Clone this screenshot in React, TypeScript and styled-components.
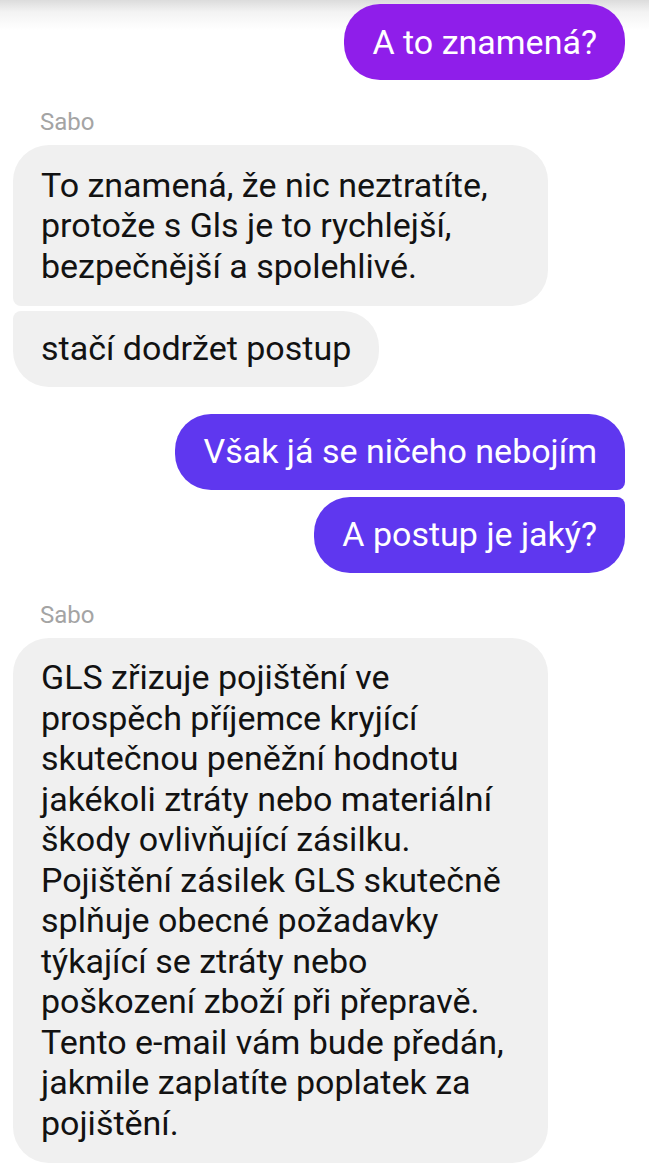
import React from "react";
import styled, { createGlobalStyle } from "styled-components";

const GlobalStyle = createGlobalStyle`
  html, body {
    margin: 0;
    padding: 0;
    background: #ffffff;
  }
  body {
    font-family: Roboto, "Noto Sans", Arial, sans-serif;
  }
`;

type Side = "in" | "out";
type Pos = "single" | "first" | "last";

const BIG = 36;
const SMALL = 8;

const radius = (side: Side, pos: Pos) => {
  // order: top-left, top-right, bottom-right, bottom-left
  const tl = side === "in" && pos === "last" ? SMALL : BIG;
  const bl = side === "in" && pos === "first" ? SMALL : BIG;
  const tr = side === "out" && pos === "last" ? SMALL : BIG;
  const br = side === "out" && pos === "first" ? SMALL : BIG;
  return `${tl}px ${tr}px ${br}px ${bl}px`;
};

const Page = styled.div`
  width: 649px;
  min-height: 1168px;
  box-sizing: border-box;
  padding: 4px 24px 0 13px;
  background: linear-gradient(to bottom, #dcdcdc 0px, #f3f3f3 12px, #ffffff 30px);
  display: flex;
  flex-direction: column;
`;

const Group = styled.div<{ $side: Side; $gap: number; $top: number }>`
  display: flex;
  flex-direction: column;
  align-items: ${(p) => (p.$side === "out" ? "flex-end" : "flex-start")};
  gap: ${(p) => p.$gap}px;
  margin-top: ${(p) => p.$top}px;
`;

const Sender = styled.div`
  font-size: 24px;
  line-height: 25px;
  color: #a4a4a4;
  margin: 30px 0 10px 27px;
`;

const Bubble = styled.div<{ $side: Side; $pos: Pos; $wide?: boolean; $tone?: string }>`
  box-sizing: border-box;
  width: ${(p) => (p.$wide ? "535px" : "fit-content")};
  padding: ${(p) => (p.$wide ? "19.5px 28px" : "17.75px 28px")};
  font-size: 34px;
  line-height: 40.5px;
  color: ${(p) => (p.$side === "out" ? "#ffffff" : "#121212")};
  background: ${(p) => (p.$side === "out" ? p.$tone || "#5f37ef" : "#f0f0f0")};
  border-radius: ${(p) => radius(p.$side, p.$pos)};
  white-space: nowrap;
`;

export default function App() {
  return (
    <>
      <GlobalStyle />
      <Page>
        <Group $side="out" $gap={7} $top={0}>
          <Bubble $side="out" $pos="single" $tone="#8f1eea">
            A to znamená?
          </Bubble>
        </Group>

        <Sender>Sabo</Sender>
        <Group $side="in" $gap={5} $top={0}>
          <Bubble $side="in" $pos="first" $wide>
            To znamená, že nic neztratíte,
            <br />
            protože s Gls je to rychlejší,
            <br />
            bezpečnější a spolehlivé.
          </Bubble>
          <Bubble $side="in" $pos="last">
            stačí dodržet postup
          </Bubble>
        </Group>

        <Group $side="out" $gap={7} $top={27}>
          <Bubble $side="out" $pos="first">
            Však já se ničeho nebojím
          </Bubble>
          <Bubble $side="out" $pos="last">
            A postup je jaký?
          </Bubble>
        </Group>

        <Sender>Sabo</Sender>
        <Group $side="in" $gap={5} $top={0}>
          <Bubble $side="in" $pos="single" $wide>
            GLS zřizuje pojištění ve
            <br />
            prospěch příjemce kryjící
            <br />
            skutečnou peněžní hodnotu
            <br />
            jakékoli ztráty nebo materiální
            <br />
            škody ovlivňující zásilku.
            <br />
            Pojištění zásilek GLS skutečně
            <br />
            splňuje obecné požadavky
            <br />
            týkající se ztráty nebo
            <br />
            poškození zboží při přepravě.
            <br />
            Tento e-mail vám bude předán,
            <br />
            jakmile zaplatíte poplatek za
            <br />
            pojištění.
          </Bubble>
        </Group>
      </Page>
    </>
  );
}
